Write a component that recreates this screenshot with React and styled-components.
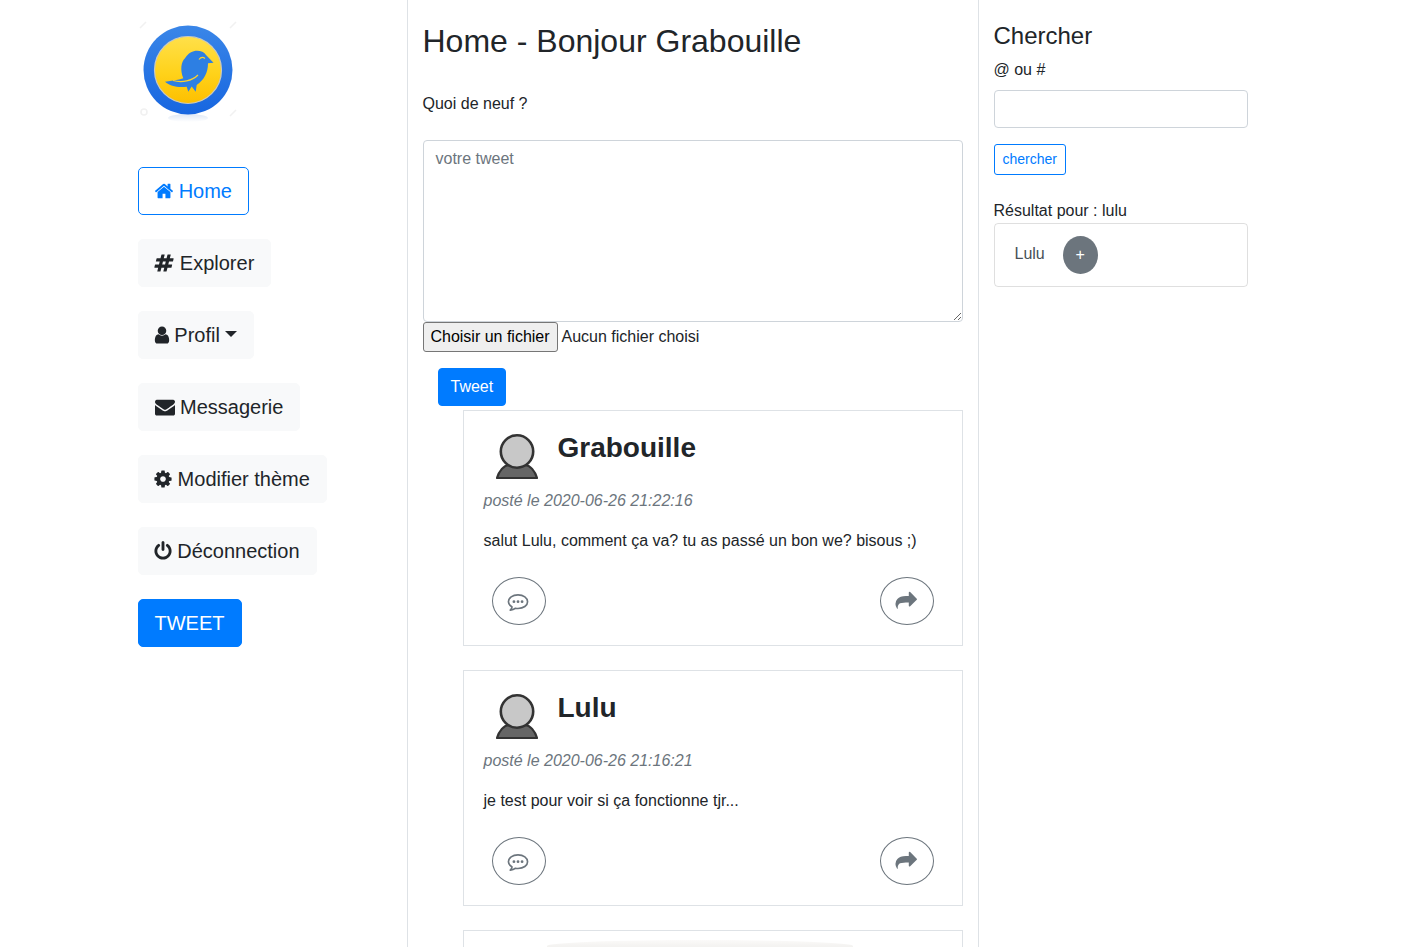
import React from 'react';
import styled, { createGlobalStyle } from 'styled-components';

const GlobalStyle = createGlobalStyle`
html, body {
    margin: 0;
    height: 947px;
    overflow: hidden;
    background: #fff;
    color: #212529;
    font-family: "Liberation Sans", Arial, sans-serif;
    font-size: 16px;
    line-height: 1.5;
}
* { box-sizing: border-box; }
`

const Page = styled.div`
display: flex;
height: 947px;
overflow: hidden;
`

//left menu
const Side = styled.nav`
width: 407px;
flex: none;
padding: 20px 0 0 137.5px;
display: flex;
flex-direction: column;
align-items: flex-start;
`
const Logo = styled.svg`
display: block;
width: 100px;
height: 103px;
margin-bottom: 44px;
`
const MenuButton = styled.button`
height: 48px;
margin: 0 0 24px;
padding: 0 16px;
display: flex;
align-items: center;
font: inherit;
font-size: 20px;
white-space: nowrap;
border-radius: 5px;
border: 1px solid ${(p) => (p.$variant === 'outline' || p.$variant === 'primary' ? '#007bff' : '#f8f9fa')};
background: ${(p) => (p.$variant === 'primary' ? '#007bff' : p.$variant === 'outline' ? '#fff' : '#f8f9fa')};
color: ${(p) => (p.$variant === 'primary' ? '#fff' : p.$variant === 'outline' ? '#007bff' : '#212529')};
`
const MenuIcon = styled.svg`
flex: none;
width: 20px;
height: 20px;
margin: 0 ${(p) => p.$right}px 0 ${(p) => p.$left}px;
fill: currentColor;
`
const Caret = styled.span`
width: 0;
height: 0;
margin-left: 5.1px;
margin-bottom: 3px;
border-top: 6px solid #212529;
border-left: 6px solid transparent;
border-right: 6px solid transparent;
`

//middle column
const Main = styled.main`
width: 571.5px;
flex: none;
padding: 0 0 0 14.5px;
border-left: 1px solid #dee2e6;
border-right: 1px solid #dee2e6;
`
const Title = styled.h1`
margin: 21px 0 31px;
font-size: 32px;
font-weight: 400;
line-height: 40px;
`
const Label = styled.div`
height: 24px;
`
const TweetInput = styled.textarea`
display: block;
width: 540px;
height: 182px;
margin-top: 24px;
padding: 6px 12px;
font: inherit;
color: #495057;
border: 1px solid #ced4da;
border-radius: 4px;
&::placeholder { color: #6c757d; opacity: 1; }
`
const FileRow = styled.div`
display: flex;
align-items: center;
height: 30px;
gap: 4px;
`
const FileButton = styled.button`
width: 135px;
height: 30px;
padding: 0;
font: inherit;
color: #000;
background: #efefef;
border: 1px solid #767676;
border-radius: 3px;
`
const SubmitButton = styled.button`
display: block;
height: 38px;
margin: 16px 0 4px 15px;
padding: 0 12px;
font: inherit;
color: #fff;
background: #007bff;
border: 1px solid #007bff;
border-radius: 4px;
`
const Feed = styled.div`
margin-left: 40px;
width: 500px;
`
const Card = styled.article`
height: 236px;
margin-bottom: 24px;
padding: 21px 20px 0;
border: 1px solid #dee2e6;
`
const CardHead = styled.div`
display: flex;
align-items: flex-start;
height: 49px;
`
const Avatar = styled.svg`
width: 42px;
height: 45px;
margin: 2px 0 0 12px;
flex: none;
`
const Name = styled.h2`
margin: 0 0 0 20px;
font-size: 28px;
font-weight: 700;
line-height: 32px;
`
const Posted = styled.div`
margin-top: 8px;
color: #6c757d;
font-style: italic;
`
const Body = styled.p`
margin: 16px 0 0;
`
const Actions = styled.div`
display: flex;
justify-content: space-between;
margin: 24px 8px 0;
`
const RoundButton = styled.button`
width: 54px;
height: 48px;
padding: 0;
display: flex;
align-items: center;
justify-content: center;
color: #6c757d;
background: #fff;
border: 1px solid #6c757d;
border-radius: 50%;
`
const ActionIcon = styled.svg`
display: block;
width: ${(p) => p.$size}px;
height: ${(p) => p.$size}px;
margin: 2px 2px 0 0;
`
const LastCard = styled.article`
height: 60px;
padding: 9px 0 0 83px;
border: 1px solid #dee2e6;
`
const Shadow = styled.div`
width: 306px;
height: 20px;
background: linear-gradient(#fbfaf9, #f4f3f1 6px);
border-radius: 50% 50% 0 0 / 6px 6px 0 0;
`

//right column
const Aside = styled.aside`
width: 285px;
flex: none;
padding: 0 0 0 15px;
`
const SearchTitle = styled.h3`
margin: 21px 0 8px;
font-size: 24px;
font-weight: 400;
line-height: 29px;
`
const SearchInput = styled.input`
display: block;
width: 254px;
height: 38px;
margin: 8px 0 16px;
border: 1px solid #ced4da;
border-radius: 4px;
`
const SearchButton = styled.button`
display: block;
height: 31px;
padding: 0 8px;
font: inherit;
font-size: 14px;
color: #007bff;
background: #fff;
border: 1px solid #007bff;
border-radius: 3px;
`
const ResultLabel = styled.div`
margin-top: 24px;
height: 24px;
`
const ResultBox = styled.div`
display: flex;
align-items: center;
width: 254px;
height: 64px;
padding-left: 20px;
border: 1px solid rgba(0,0,0,.125);
border-radius: 4px;
color: #495057;
`
const ResultName = styled.span`
margin-bottom: 2px;
`
const AddButton = styled.button`
width: 35px;
height: 38px;
margin-left: 18px;
padding: 0;
font: inherit;
color: #fff;
background: #6c757d;
border: none;
border-radius: 50%;
`

const paths = {
    home: 'M1472 992v480q0 26-19 45t-45 19h-384v-384h-256v384h-384q-26 0-45-19t-19-45v-480q0-1 .5-3t.5-3l575-474 575 474q1 2 1 6zm223-69l-62 74q-8 9-21 11h-3q-13 0-21-7l-692-577-692 577q-12 8-24 7-13-2-21-11l-62-74q-8-10-7-23.500t11-21.500l719-599q32-26 76-26t76 26l244 204v-195q0-14 9-23t23-9h192q14 0 23 9t9 23v408l219 182q10 8 11 21.500t-7 23.500z',
    hash: 'M991 1024l64-256h-254l-64 256h254zm768-504l-56 224q-7 24-31 24h-327l-64 256h311q15 0 25 12 10 14 6 28l-56 224q-5 24-31 24h-327l-81 328q-7 24-31 24h-224q-16 0-26-12-9-12-6-28l78-312h-254l-81 328q-7 24-31 24h-225q-15 0-25-12-9-12-6-28l78-312h-311q-15 0-25-12-9-12-6-28l56-224q7-24 31-24h327l64-256h-311q-15 0-25-12-10-14-6-28l56-224q5-24 31-24h327l81-328q7-24 32-24h224q15 0 25 12 9 12 6 28l-78 312h254l81-328q7-24 32-24h224q15 0 25 12 9 12 6 28l-78 312h311q15 0 25 12 9 12 6 28z',
    user: 'M1536 1399q0 109-62.500 187t-150.500 78h-854q-88 0-150.500-78t-62.500-187q0-85 8.500-160.500t31.500-151.500 58.500-130 94-88.500 134.500-34.500q131 128 313 128t313-128q76 0 134.500 34.500t94 88.500 58.500 130 31.500 151.500 8.500 160.500zm-256-887q0 159-112.500 271.500t-271.500 112.500-271.500-112.500-112.500-271.500 112.500-271.500 271.500-112.500 271.500 112.500 112.500 271.500z',
    envelope: 'M1792 710v794q0 66-47 113t-113 47h-1472q-66 0-113-47t-47-113v-794q44 49 101 87 362 246 497 345 57 42 92.500 65.500t94.500 48 110 24.500h2q51 0 110-24.500t94.500-48 92.500-65.500q170-123 498-345 57-39 100-87zm0-294q0 79-49 151t-122 123q-376 261-468 325-10 7-42.500 30.500t-54 38-52 32.500-57.500 27-50 9h-2q-23 0-50-9t-57.500-27-52-32.500-54-38-42.500-30.500q-91-64-262-182.500t-205-142.500q-62-42-117-115.500t-55-136.500q0-78 41.500-130t118.500-52h1472q65 0 112.500 47t47.500 113z',
    cog: 'M1152 896q0-106-75-181t-181-75-181 75-75 181 75 181 181 75 181-75 75-181zm512-109v222q0 12-8 23t-20 13l-185 28q-19 54-39 91 35 50 107 138 10 12 10 25t-9 23q-27 37-99 108t-94 71q-12 0-26-9l-138-108q-44 23-91 38-16 136-29 186-7 28-36 28h-222q-14 0-24.500-8.500t-11.500-21.500l-28-184q-49-16-90-37l-141 107q-10 9-25 9-14 0-25-11-126-114-165-168-7-10-7-23 0-12 8-23 15-21 51-66.500t54-70.500q-27-50-41-99l-183-27q-13-2-21-12.500t-8-23.500v-222q0-12 8-23t19-13l186-28q14-46 39-92-40-57-107-138-10-12-10-24 0-10 9-23 26-36 98.500-107.500t94.500-71.500q13 0 26 10l138 107q44-23 91-38 16-136 29-186 7-28 36-28h222q14 0 24.500 8.500t11.500 21.500l28 184q49 16 90 37l142-107q9-9 24-9 13 0 25 10 129 119 165 170 7 8 7 22 0 12-8 23-15 21-51 66.500t-54 70.500q26 50 41 98l183 28q13 2 21 12.500t8 23.500z',
    power: 'M1664 896q0 156-61 298t-164 245-245 164-298 61-298-61-245-164-164-245-61-298q0-182 80.500-343t226.500-270q43-32 95.500-25t83.500 50q32 42 24.500 94.500t-49.500 84.500q-98 74-151.500 181t-53.500 228q0 104 40.500 198.500t109.500 163.500 163.500 109.500 198.500 40.500 198.500-40.500 163.500-109.500 109.500-163.500 40.500-198.500q0-121-53.500-228t-151.500-181q-42-32-49.500-84.500t24.500-94.500q31-43 84-50t95 25q146 109 226.500 270t80.500 343zm-640-768v640q0 52-38 90t-90 38-90-38-38-90v-640q0-52 38-90t90-38 90 38 38 90z',
    share: 'M1792 640Q1792 666 1773 685L1261 1197Q1216 1235 1171 1197Q1152 1178 1152 1152V896H928Q528 896 388 1016Q258 1136 288 1366Q291 1396 268 1396Q253 1396 233 1366Q113 1196 113 1016Q113 766 263 616Q463 384 928 384H1152V128Q1152 102 1171 83Q1216 45 1261 83L1773 595Q1792 614 1792 640Z',
}

function Icon({ name, left = 0, right = 5.56 }) {
    return (
        <MenuIcon viewBox="0 0 1792 1792" $left={left} $right={right}>
            <path d={paths[name]} />
        </MenuIcon>
    )
}

function LogoMark() {
    return (
        <Logo viewBox="0 0 100 103">
            <defs>
                <linearGradient id="ring" x1="0" y1="0" x2="0" y2="1">
                    <stop offset="0" stopColor="#3a86e8" />
                    <stop offset="1" stopColor="#1766e0" />
                </linearGradient>
                <linearGradient id="gold" x1="0" y1="0" x2="0" y2="1">
                    <stop offset="0" stopColor="#ffe04a" />
                    <stop offset="0.55" stopColor="#ffd21a" />
                    <stop offset="1" stopColor="#fdbf00" />
                </linearGradient>
                <linearGradient id="glow" x1="0" y1="0" x2="0" y2="1">
                    <stop offset="0" stopColor="#dfe8f5" />
                    <stop offset="1" stopColor="#fff" />
                </linearGradient>
            </defs>
            <g fill="none" stroke="#f1f1f1" strokeWidth="1.6">
                <path d="M2 8 L8 2" />
                <path d="M92 8 L98 2" />
                <circle cx="6" cy="92" r="3" />
                <path d="M92 96 L98 90" />
            </g>
            <ellipse cx="50" cy="98" rx="20" ry="4" fill="url(#glow)" />
            <circle cx="50" cy="50" r="44.5" fill="url(#ring)" />
            <circle cx="50" cy="50" r="33.5" fill="url(#gold)" stroke="#c9c9c0" strokeWidth="1.2" />
            <path d="M27 61.700C34 61 40 60 45.300 58.300C42 50 43 42 47 38.300C50 33 55 30.700 59 30.700C63 30.700 66 32 68 35L75.500 42.700L70 43.300C70 53 66 60 58.700 65L57.700 71.700L53.700 66.500L50.300 71.700L48.700 66.700C40 68 32 66 27 61.700Z" fill="#2d7fe3" />
            <path d="M35 60.500C44 63 54 61 60 55" fill="none" stroke="#fdd22d" strokeWidth="1.2" />
            <path d="M61 39.500C63 37 65 37 67 38.500" fill="none" stroke="#fdd22d" strokeWidth="1.2" />
        </Logo>
    )
}

function AvatarIcon() {
    return (
        <Avatar viewBox="0 0 42 45">
            <path d="M1 44C3 37 8 31 13 31L29 31C34 31 39 37 41 44Z" fill="#666" stroke="#333" strokeWidth="2.200" strokeLinejoin="round" />
            <circle cx="21" cy="17.500" r="16.200" fill="#c8c8c8" stroke="#333" strokeWidth="2.600" />
        </Avatar>
    )
}

function CommentIcon() {
    return (
        <ActionIcon viewBox="0 0 20 20" $size={22}>
            <path d="M10 3.500C5 3.500 1.300 6.200 1.300 9.700C1.300 11.700 2.600 13.400 4.600 14.500C4.400 15.700 3.700 16.700 3 17.400C5 17.200 6.600 16.500 7.700 15.700C8.400 15.800 9.200 15.900 10 15.900C15 15.900 18.700 13.200 18.700 9.700C18.700 6.200 15 3.500 10 3.500Z" fill="none" stroke="currentColor" strokeWidth="1.500" strokeLinejoin="round" />
            <circle cx="6.300" cy="9.700" r="1.250" fill="currentColor" />
            <circle cx="10" cy="9.700" r="1.250" fill="currentColor" />
            <circle cx="13.700" cy="9.700" r="1.250" fill="currentColor" />
        </ActionIcon>
    )
}

function ShareIcon() {
    return (
        <ActionIcon viewBox="0 0 1792 1792" $size={23} fill="currentColor">
            <path d={paths.share} />
        </ActionIcon>
    )
}

function Tweet({ name, date, text }) {
    return (
        <Card>
            <CardHead>
                <AvatarIcon />
                <Name>{name}</Name>
            </CardHead>
            <Posted>posté le {date}</Posted>
            <Body>{text}</Body>
            <Actions>
                <RoundButton><CommentIcon /></RoundButton>
                <RoundButton><ShareIcon /></RoundButton>
            </Actions>
        </Card>
    )
}

export default function App() {
    return (
        <Page>
            <GlobalStyle />
            <Side>
                <LogoMark />
                <MenuButton $variant="outline"><Icon name="home" left={-0.7} right={4.83} />Home</MenuButton>
                <MenuButton><Icon name="hash" left={-0.7} right={6} />Explorer</MenuButton>
                <MenuButton><Icon name="user" left={-2.9} right={2.7} />Profil<Caret /></MenuButton>
                <MenuButton><Icon name="envelope" />Messagerie</MenuButton>
                <MenuButton><Icon name="cog" left={-1.4} right={4.5} />Modifier thème</MenuButton>
                <MenuButton><Icon name="power" left={-1.4} right={4.1} />Déconnection</MenuButton>
                <MenuButton $variant="primary">TWEET</MenuButton>
            </Side>
            <Main>
                <Title>Home - Bonjour Grabouille</Title>
                <Label>Quoi de neuf ?</Label>
                <TweetInput placeholder="votre tweet" />
                <FileRow>
                    <FileButton>Choisir un fichier</FileButton>
                    <span>Aucun fichier choisi</span>
                </FileRow>
                <SubmitButton>Tweet</SubmitButton>
                <Feed>
                    <Tweet name="Grabouille" date="2020-06-26 21:22:16" text="salut Lulu, comment ça va? tu as passé un bon we? bisous ;)" />
                    <Tweet name="Lulu" date="2020-06-26 21:16:21" text="je test pour voir si ça fonctionne tjr..." />
                    <LastCard><Shadow /></LastCard>
                </Feed>
            </Main>
            <Aside>
                <SearchTitle>Chercher</SearchTitle>
                <div>@ ou #</div>
                <SearchInput />
                <SearchButton>chercher</SearchButton>
                <ResultLabel>Résultat pour : lulu</ResultLabel>
                <ResultBox>
                    <ResultName>Lulu</ResultName>
                    <AddButton>+</AddButton>
                </ResultBox>
            </Aside>
        </Page>
    )
}
